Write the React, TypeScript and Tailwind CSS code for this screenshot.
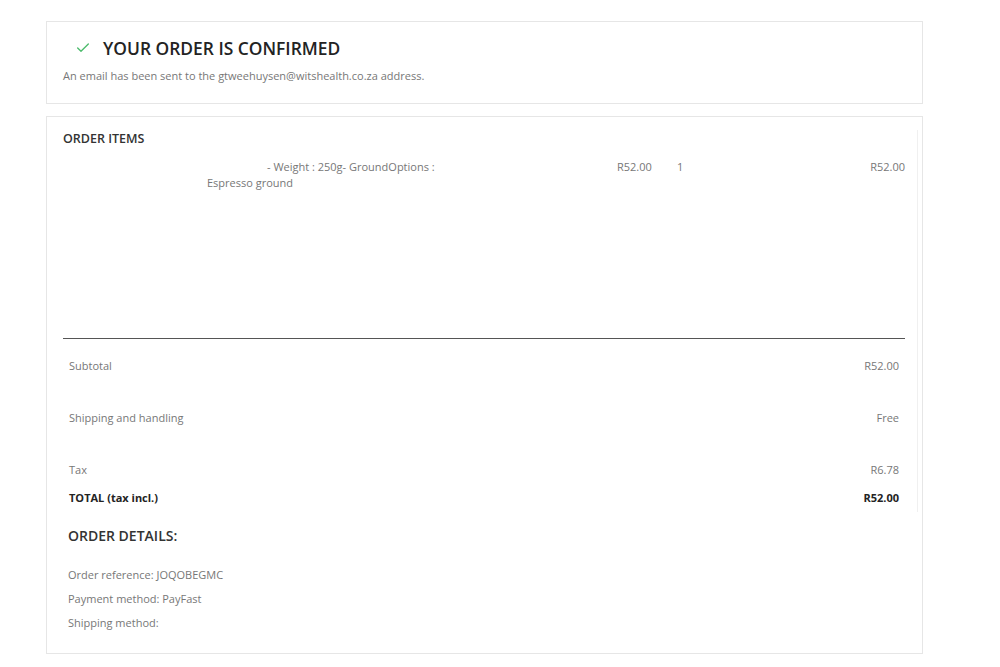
import { Check } from 'lucide-react';

const totals = [
  { label: 'Subtotal', value: 'R52.00' },
  { label: 'Shipping and handling', value: 'Free' },
  { label: 'Tax', value: 'R6.78' },
];

export default function App() {
  return (
    <div className="min-h-[667px] bg-white pt-[21px] pl-[46px] font-['Open_Sans',sans-serif] text-[11px] text-[#777777]">
      <div className="w-[877px]">
        {/* Confirmation */}
        <section className="h-[83px] border border-[#e6e6e6] px-[16px] pt-[14px]">
          <h3 className="flex items-center text-[17.4px] font-semibold uppercase leading-[24px] text-[#232323]">
            <Check className="ml-[12px] mr-[12px] h-[16px] w-[16px] text-[#4cbb6c]" strokeWidth={2} />
            Your order is confirmed
          </h3>
          <p className="mt-[8px] text-[11px] leading-[16px]">
            An email has been sent to the gtweehuysen@witshealth.co.za address.
          </p>
        </section>

        {/* Order items + totals */}
        <section className="mt-[12px] h-[538px] border border-[#e6e6e6] pt-[13px] pl-[16px] pr-[4px]">
          <div className="border-r border-[#f0f0f0] pr-[12px]">
            <h3 className="text-[12.5px] font-semibold uppercase leading-[18px] text-[#333333]">Order items</h3>

            <div className="mt-[11px] flex h-[179px] items-start text-[11px] leading-[16px]">
              <div className="w-[144px]" />
              <div className="w-[236px]">
                <span className="inline-block w-[60px]" />- Weight : 250g- GroundOptions : Espresso ground
              </div>
              <div className="ml-[174px] w-[60px]">R52.00</div>
              <div className="w-[60px]">1</div>
              <div className="flex-1 text-right">R52.00</div>
            </div>

            <hr className="border-t border-[#555555]" />

            <div className="px-[6px] pt-[19px] text-[11px] leading-[16px]">
              {totals.map((row) => (
                <div key={row.label} className="mb-[36px] flex justify-between">
                  <span>{row.label}</span>
                  <span>{row.value}</span>
                </div>
              ))}
              <div className="-mt-[24px] flex justify-between pb-[6px] font-bold text-[#232323]">
                <span>TOTAL (tax incl.)</span>
                <span>R52.00</span>
              </div>
            </div>
          </div>

          <div className="pl-[5px]">
            <h3 className="mt-[14px] text-[14px] font-semibold uppercase leading-[20px] text-[#333333]">Order details:</h3>
            <ul className="mt-[21px] space-y-[8px] text-[11px] leading-[16px]">
              <li>Order reference: JOQOBEGMC</li>
              <li>Payment method: PayFast</li>
              <li>Shipping method:</li>
            </ul>
          </div>
        </section>
      </div>
    </div>
  );
}
